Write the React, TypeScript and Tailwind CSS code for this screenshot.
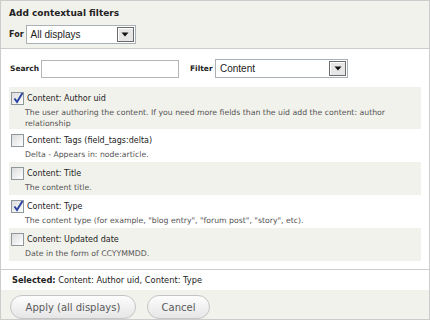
import React from "react";

const Arrow = () => (
  <span className="flex h-full w-[17px] items-center justify-center border border-[#6b6b6b] bg-[#e6e6e6] shadow-[inset_1px_1px_0_#fff]">
    <svg width="8" height="5" viewBox="0 0 8 5">
      <path d="M0.5 0.5 H7.5 L4 4.5 Z" fill="#111" />
    </svg>
  </span>
);

const Select = ({ value, w }: { value: string; w: string }) => (
  <div className={`flex h-[19px] ${w} items-stretch border border-[#a9b0b6] bg-white p-px`}>
    <span className="flex flex-1 items-center pl-[3px] text-[10px] text-[#222] [font-family:'Liberation_Sans',Arial,sans-serif]">
      {value}
    </span>
    <Arrow />
  </div>
);

const Check = ({ checked }: { checked: boolean }) => (
  <span className="relative block h-[13px] w-[13px] shrink-0 border border-[#8f969c] bg-gradient-to-br from-[#dcdcdc] to-[#ffffff]">
    {checked && (
      <svg className="absolute left-[1px] top-[-1px]" width="11" height="12" viewBox="0 0 11 12">
        <path d="M1.5 6.5 L4 10 L9.5 1" fill="none" stroke="#2c45a0" strokeWidth="2" />
      </svg>
    )}
  </span>
);

const rows = [
  {
    label: "Content: Author uid",
    desc: "The user authoring the content. If you need more fields than the uid add the content: author relationship",
    checked: true,
    alt: true,
    first: true,
  },
  {
    label: "Content: Tags (field_tags:delta)",
    desc: "Delta - Appears in: node:article.",
    checked: false,
    alt: false,
  },
  { label: "Content: Title", desc: "The content title.", checked: false, alt: true },
  {
    label: "Content: Type",
    desc: 'The content type (for example, "blog entry", "forum post", "story", etc).',
    checked: true,
    alt: false,
  },
  {
    label: "Content: Updated date",
    desc: "Date in the form of CCYYMMDD.",
    checked: false,
    alt: true,
  },
];

export default function App() {
  return (
    <div className="flex h-[320px] w-[430px] flex-col border border-[#cccccc] bg-white text-[#222] [font-family:'DejaVu_Sans',Verdana,sans-serif]">
      <div className="h-[48px] shrink-0 border-b border-[#cccccc] bg-[#f2f2ec] px-[8px] pt-[6px]">
        <div className="text-[9px] font-bold leading-[12px]">Add contextual filters</div>
        <div className="mt-[6px] flex items-center gap-[2px]">
          <span className="text-[8px] font-bold">For</span>
          <Select value="All displays" w="w-[110px]" />
        </div>
      </div>

      <div className="flex flex-1 flex-col border-b border-[#cccccc] px-[8px] pb-[8px] pt-[10px]">
        <div className="flex items-center">
          <span className="ml-[1px] w-[31px] text-[7.5px] font-bold">Search</span>
          <div className="h-[18px] w-[138px] border border-[#b5b5b5] bg-white" />
          <span className="ml-[11px] w-[25px] text-[7.5px] font-bold">Filter</span>
          <Select value="Content" w="w-[133px]" />
        </div>
        <div className="mt-[9px] flex flex-col">
          {rows.map((r) => (
            <div
              key={r.label}
              className={`${r.alt ? "bg-[#f2f2ec]" : "bg-white"} ${r.first ? "h-[42px]" : "h-[33px]"} pl-[2px] pt-[4px]`}
            >
              <div className="flex items-center gap-[3px]">
                <Check checked={r.checked} />
                <span className="mt-[2px] text-[8px] leading-[12px] text-[#222]">{r.label}</span>
              </div>
              <div className="ml-[14px] mr-[28px] mt-[2px] text-[7.75px] leading-[11px] text-[#555]">{r.desc}</div>
            </div>
          ))}
        </div>
      </div>

      <div className="flex h-[20px] shrink-0 items-center pl-[11px] text-[8.25px]">
        <span className="font-bold">Selected:</span>
        <span>&nbsp;Content: Author uid, Content: Type</span>
      </div>

      <div className="flex flex-1 items-start gap-[11px] bg-[#f2f2ec] pl-[9px] pt-[5px]">
        <button className="h-[24px] w-[126px] rounded-full border border-[#c4c4c4] bg-gradient-to-b from-[#fdfdfd] to-[#e6e6e6] text-[10px] text-[#5a5a5a]">
          Apply (all displays)
        </button>
        <button className="h-[24px] w-[63px] rounded-full border border-[#c4c4c4] bg-gradient-to-b from-[#fdfdfd] to-[#e6e6e6] text-[10px] text-[#5a5a5a]">
          Cancel
        </button>
      </div>
    </div>
  );
}
